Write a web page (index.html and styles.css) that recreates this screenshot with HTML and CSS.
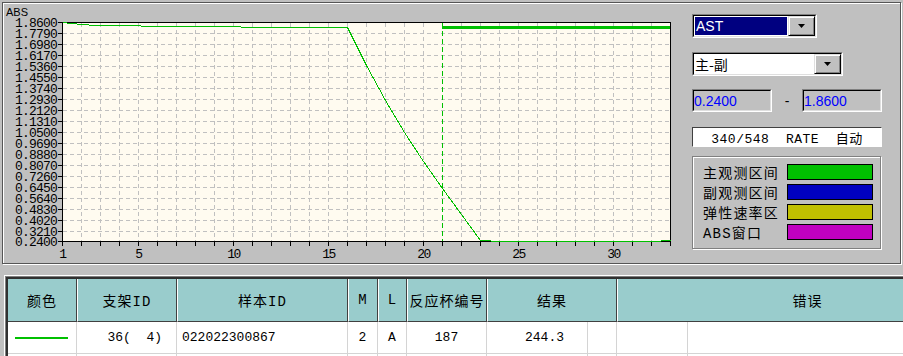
FILE: index.html
```html
<!DOCTYPE html>
<html lang="zh">
<head>
<meta charset="utf-8">
<title>ABS</title>
<link rel="stylesheet" href="styles.css">
</head>
<body>
<div class="top">
  <svg class="chart" width="680" height="260" viewBox="3 3 680 260" shape-rendering="crispEdges">
    <text class="abs" x="6" y="16">ABS</text>
    <rect x="62" y="22" width="609" height="220" fill="#fffbf0"/>
    <path class="gl" d="M63 33.5H670M63 44.5H670M63 55.5H670M63 66.5H670M63 77.5H670M63 88.5H670M63 99.5H670M63 110.5H670M63 121.5H670M63 132.5H670M63 143.5H670M63 154.5H670M63 165.5H670M63 176.5H670M63 187.5H670M63 198.5H670M63 209.5H670M63 220.5H670M63 231.5H670"/>
    <path class="gl" d="M81.5 23V241M100.5 23V241M119.5 23V241M138.5 23V241M157.5 23V241M176.5 23V241M195.5 23V241M214.5 23V241M233.5 23V241M252.5 23V241M271.5 23V241M290.5 23V241M309.5 23V241M328.5 23V241M347.5 23V241M366.5 23V241M385.5 23V241M404.5 23V241M423.5 23V241M461.5 23V241M480.5 23V241M499.5 23V241M518.5 23V241M537.5 23V241M556.5 23V241M575.5 23V241M594.5 23V241M613.5 23V241M632.5 23V241M651.5 23V241"/>
    <path class="ax" d="M58 22.5H62M58 33.5H62M58 44.5H62M58 55.5H62M58 66.5H62M58 77.5H62M58 88.5H62M58 99.5H62M58 110.5H62M58 121.5H62M58 132.5H62M58 143.5H62M58 154.5H62M58 165.5H62M58 176.5H62M58 187.5H62M58 198.5H62M58 209.5H62M58 220.5H62M58 231.5H62M58 241.5H62"/>
    <path class="ax" d="M62.5 242V246M81.5 242V246M100.5 242V246M119.5 242V246M138.5 242V246M157.5 242V246M176.5 242V246M195.5 242V246M214.5 242V246M233.5 242V246M252.5 242V246M271.5 242V246M290.5 242V246M309.5 242V246M328.5 242V246M347.5 242V246M366.5 242V246M385.5 242V246M404.5 242V246M423.5 242V246M442.5 242V246M461.5 242V246M480.5 242V246M499.5 242V246M518.5 242V246M537.5 242V246M556.5 242V246M575.5 242V246M594.5 242V246M613.5 242V246M632.5 242V246M651.5 242V246M670.5 242V246"/>
    <path class="ax" d="M62.5 22V242M62 241.5H671M62 22.5H671M670.5 22V242"/>
    <path class="mark" d="M442.5 23V241"/>
    <path class="thick" d="M442 27.5H670"/>
    <polyline class="curve" points="62.5,22.5 66.5,22.5 67.5,23.5 76.5,23.5 77.5,24.5 88.5,24.5 89.5,25.5 140.5,25.5 141.5,26.5 240.5,26.5 241.5,27.5 347.5,27.5 366.5,65.5 385.5,100.5 404.5,132.5 423.5,161.5 442.5,188.5 461.5,214.5 480.5,240.5 490.5,240.5 491.5,241.5 660.5,241.5 661.5,240.5 670.5,240.5"/>
    <g class="ylab">
      <text x="57" y="27">1.8600</text>
      <text x="57" y="38">1.7790</text>
      <text x="57" y="49">1.6980</text>
      <text x="57" y="60">1.6170</text>
      <text x="57" y="71">1.5360</text>
      <text x="57" y="82">1.4550</text>
      <text x="57" y="93">1.3740</text>
      <text x="57" y="104">1.2930</text>
      <text x="57" y="115">1.2120</text>
      <text x="57" y="126">1.1310</text>
      <text x="57" y="137">1.0500</text>
      <text x="57" y="148">0.9690</text>
      <text x="57" y="159">0.8880</text>
      <text x="57" y="170">0.8070</text>
      <text x="57" y="181">0.7260</text>
      <text x="57" y="192">0.6450</text>
      <text x="57" y="203">0.5640</text>
      <text x="57" y="214">0.4830</text>
      <text x="57" y="225">0.4020</text>
      <text x="57" y="236">0.3210</text>
      <text x="57" y="246">0.2400</text>
    </g>
    <g class="xlab">
      <text x="62.5" y="258">1</text>
      <text x="138.5" y="258">5</text>
      <text x="233.5" y="258">10</text>
      <text x="328.5" y="258">15</text>
      <text x="423.5" y="258">20</text>
      <text x="518.5" y="258">25</text>
      <text x="613.5" y="258">30</text>
    </g>
  </svg>
  <div class="side">
    <div class="combo combo-ast">
      <div class="combo-in">
        <div class="combo-val sel">AST</div>
        <div class="combo-btn"><svg width="7" height="4" viewBox="0 0 7 4"><polygon points="0,0 7,0 3.5,4" fill="#000"/></svg></div>
      </div>
    </div>
    <div class="combo combo-mode">
      <div class="combo-in">
        <div class="combo-val cjk">主-副</div>
        <div class="combo-btn"><svg width="7" height="4" viewBox="0 0 7 4"><polygon points="0,0 7,0 3.5,4" fill="#000"/></svg></div>
      </div>
    </div>
    <div class="range">
      <div class="field"><div class="field-in">0.2400</div></div>
      <span class="dash">-</span>
      <div class="field"><div class="field-in">1.8600</div></div>
    </div>
    <div class="info">340/548  RATE  自动</div>
    <div class="legend">
      <div class="lg-row"><span class="lg-label">主观测区间</span><span class="sw sw-g"></span></div>
      <div class="lg-row"><span class="lg-label">副观测区间</span><span class="sw sw-b"></span></div>
      <div class="lg-row"><span class="lg-label">弹性速率区</span><span class="sw sw-y"></span></div>
      <div class="lg-row"><span class="lg-label">ABS窗口</span><span class="sw sw-m"></span></div>
    </div>
  </div>
</div>
<div class="tbl">
  <div class="tbl-in">
    <div class="tbl-body">
      <div class="hdr">
        <div class="w69">颜色</div>
        <div class="w100">支架ID</div>
        <div class="w171">样本ID</div>
        <div class="w30">M</div>
        <div class="w29">L</div>
        <div class="w80">反应杯编号</div>
        <div class="w130">结果</div>
        <div class="w381">错误</div>
      </div>
      <div class="row">
        <div class="w69"><span class="line"></span></div>
        <div class="w100 r pr14">36(  4)</div>
        <div class="w171 pl5">022022300867</div>
        <div class="w30 c">2</div>
        <div class="w29 c">A</div>
        <div class="w80 c">187</div>
        <div class="w101 r pr23">244.3</div>
        <div class="w29"></div>
        <div class="w71"></div>
        <div class="w300"></div>
      </div>
      <div class="row">
        <div class="w69"></div>
        <div class="w100"></div>
        <div class="w171"></div>
        <div class="w30"></div>
        <div class="w29"></div>
        <div class="w80"></div>
        <div class="w101"></div>
        <div class="w29"></div>
        <div class="w71"></div>
        <div class="w300"></div>
      </div>
    </div>
  </div>
</div>
</body>
</html>
```
FILE: styles.css
```css
* { box-sizing: border-box; }
body {
  margin: 0;
  width: 903px;
  height: 356px;
  overflow: hidden;
  background: #c0c0c0;
  color: #000;
  font-family: "Liberation Sans", "Noto Sans CJK SC", sans-serif;
}

/* ---------- top panel ---------- */
.top {
  display: flex;
  width: 899px;
  height: 262px;
  margin: 2px 0 0 2px;
  border: 1px solid #555;
  box-shadow: inset 1px 1px 0 #fff, 1px 1px 0 #fff;
}
.chart { flex: none; display: block; }
.chart .abs { font: 11px "Liberation Sans", sans-serif; fill: #000; }
.chart .gl { fill: none; stroke: #c0c0c0; stroke-width: 1; stroke-dasharray: 4 3; }
.chart .ax { fill: none; stroke: #000; stroke-width: 1; }
.chart .mark { fill: none; stroke: #00c000; stroke-width: 1; stroke-dasharray: 5 3; }
.chart .thick { fill: none; stroke: #00c000; stroke-width: 3; }
.chart .curve { fill: none; stroke: #00c000; stroke-width: 1; }
.chart .ylab { font: 13px "Liberation Mono", monospace; letter-spacing: -0.8px; text-anchor: end; fill: #000; }
.chart .xlab { font: 13px "Liberation Mono", monospace; text-anchor: middle; letter-spacing: -1.5px; fill: #000; }

.side {
  flex: none;
  width: 190px;
  margin: 11px 0 0 9px;
  display: flex;
  flex-direction: column;
  align-items: flex-start;
}

.combo {
  display: flex;
  height: 24px;
  border: 1px solid;
  border-color: #808080 #fff #fff #808080;
}
.combo-ast { width: 125px; }
.combo-mode { width: 151px; margin-top: 14px; }
.combo-in {
  flex: 1;
  display: flex;
  border: 1px solid;
  border-color: #000 #dfdfdf #dfdfdf #000;
  background: #fff;
}
.combo-val {
  flex: 1;
  margin: 1px;
  display: flex;
  align-items: center;
  padding-left: 1px;
  font-size: 14px;
  white-space: nowrap;
}
.combo-val.sel { background: #000080; color: #fff; }
.combo-val.cjk { font: 14px "Noto Sans CJK SC", sans-serif; padding-left: 0; }
.combo-btn {
  flex: none;
  width: 27px;
  background: #c0c0c0;
  border: 1px solid;
  border-color: #dfdfdf #000 #000 #dfdfdf;
  box-shadow: inset 1px 1px 0 #fff, inset -1px -1px 0 #808080;
  display: flex;
  align-items: center;
  justify-content: center;
}
.combo-btn svg { display: block; }

.range {
  display: flex;
  align-items: center;
  width: 190px;
  margin-top: 13px;
}
.field {
  width: 80px;
  height: 23px;
  border: 1px solid;
  border-color: #808080 #fff #fff #808080;
}
.field-in {
  height: 100%;
  border: 1px solid;
  border-color: #000 #dfdfdf #dfdfdf #000;
  color: #0000ff;
  font-size: 14px;
  display: flex;
  align-items: center;
}
.dash { width: 30px; text-align: center; font-size: 14px; }

.info {
  margin-top: 15px;
  width: 190px;
  height: 20px;
  background: #fff;
  border: 1px solid;
  border-color: #404040 #fff #fff #404040;
  font: 13px "Liberation Mono", "Noto Sans CJK SC", monospace;
  letter-spacing: 0.5px;
  white-space: pre;
  display: flex;
  align-items: center;
  justify-content: center;
}

.legend {
  margin-top: 9px;
  width: 189px;
  height: 93px;
  border: 1px solid #808080;
  box-shadow: inset 1px 1px 0 #fff, 1px 1px 0 #fff;
  padding: 5px 0 0 10px;
}
.lg-row { display: flex; align-items: center; height: 20px; }
.lg-label {
  width: 84px;
  font: 14px "Liberation Mono", "Noto Sans CJK SC", monospace;
  letter-spacing: 1.2px;
  white-space: nowrap;
}
.sw { width: 86px; height: 16px; border: 1px solid #000; }
.sw-g { background: #00c000; }
.sw-b { background: #0000c0; }
.sw-y { background: #c0c000; }
.sw-m { background: #c000c0; }

/* ---------- table ---------- */
.tbl {
  margin: 11px 0 0 4px;
  width: 1000px;
  border-top: 1px solid #fff;
  border-left: 1px solid #fff;
}
.tbl-in { border-top: 1px solid #808080; border-left: 1px solid #808080; }
.tbl-body { border-top: 2px solid #303030; border-left: 2px solid #303030; }

.hdr { display: flex; height: 43px; }
.hdr > div {
  flex: none;
  background: #99cccc;
  border-left: 1px solid #fff;
  border-right: 1px solid #404040;
  border-bottom: 1px solid #404040;
  display: flex;
  align-items: center;
  justify-content: center;
  font: 14px "Liberation Mono", "Noto Sans CJK SC", monospace;
  letter-spacing: 1px;
  white-space: nowrap;
}
.hdr > div:first-child { border-left: 0; }

.row { display: flex; height: 32px; }
.row > div {
  flex: none;
  background: #fff;
  border-right: 1px solid #d4d4d4;
  border-bottom: 1px solid #d4d4d4;
  display: flex;
  align-items: center;
  font: 13px "Liberation Mono", monospace;
  white-space: pre;
}
.row .r { justify-content: flex-end; }
.row .c { justify-content: center; }
.pr14 { padding-right: 14px; }
.pr23 { padding-right: 23px; }
.pl5 { padding-left: 5px; }
.line { display: block; width: 53px; height: 2px; margin-left: 7px; background: #00c000; }

.w29 { width: 29px; }
.w30 { width: 30px; }
.w69 { width: 69px; }
.w71 { width: 71px; }
.w80 { width: 80px; }
.w100 { width: 100px; }
.w101 { width: 101px; }
.w130 { width: 130px; }
.w171 { width: 171px; }
.w300 { width: 300px; }
.w381 { width: 381px; }
```
